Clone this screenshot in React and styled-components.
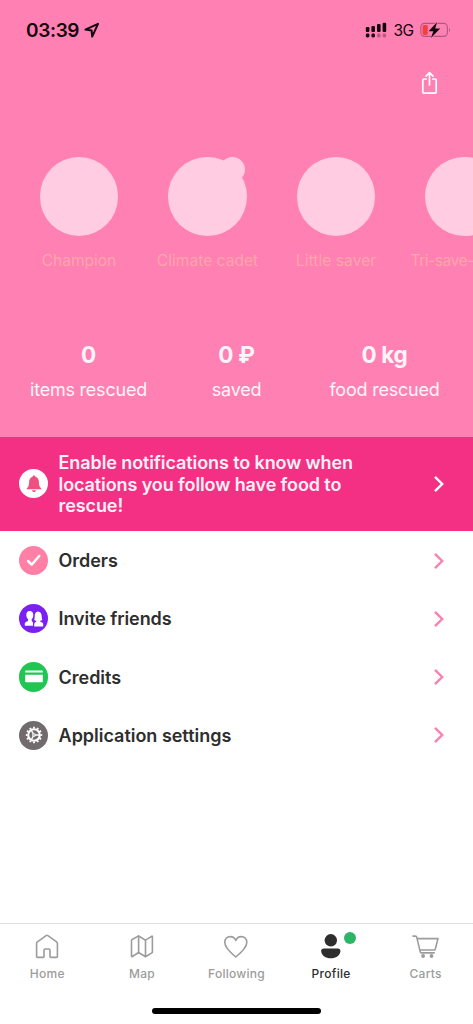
import styled, { createGlobalStyle } from 'styled-components';

const GlobalStyle = createGlobalStyle`
  * {
    box-sizing: border-box;
  }
  body {
    margin: 0;
    background: #ffffff;
    font-family: Inter, 'Liberation Sans', sans-serif;
  }
  svg {
    display: block;
    flex-shrink: 0;
  }
`;

const Screen = styled.div`
  width: 100%;
  height: 100vh;
  display: flex;
  flex-direction: column;
  overflow: hidden;
  background: #ffffff;
`;

const Header = styled.header`
  height: 436.5px;
  flex-shrink: 0;
  background: #ff80b3;
`;

const StatusBar = styled.div`
  height: 60px;
  padding: 0 22px 0 26px;
  display: flex;
  justify-content: space-between;
  align-items: center;
  color: #12060c;
`;

const StatusGroup = styled.div`
  display: flex;
  align-items: center;
`;

const Time = styled.span`
  width: 58px;
  padding-top: 2px;
  font-size: 19px;
  font-weight: 600;
  letter-spacing: -0.35px;
  line-height: 24px;
  white-space: nowrap;
`;

const Network = styled.span`
  width: 26.5px;
  margin-left: 6.5px;
  padding-top: 2px;
  font-size: 15.5px;
  font-weight: 400;
  letter-spacing: -0.6px;
  line-height: 20px;
`;

const ShareButton = styled.button`
  display: block;
  margin: 11px 35px 0 auto;
  padding: 0;
  border: none;
  background: none;
  color: #ffffff;
`;

const BadgeList = styled.div`
  display: flex;
  margin-top: 62px;
  padding-left: 14.75px;
  overflow: hidden;
`;

const Badge = styled.div`
  width: 128.5px;
  flex-shrink: 0;
  display: flex;
  flex-direction: column;
  align-items: center;
`;

const BadgeCircle = styled.div`
  position: relative;
  width: 78.5px;
  height: 78.5px;
  border-radius: 50%;
  background: #ffcce1;
`;

const BadgeCounter = styled.span`
  position: absolute;
  top: 0;
  right: 1.5px;
  width: 25px;
  height: 25px;
  border-radius: 50%;
  background: #ffcce1;
`;

const BadgeLabel = styled.span`
  min-width: ${({ $minWidth }) => $minWidth || 0}px;
  margin-top: 15px;
  font-size: 15.5px;
  line-height: 20px;
  letter-spacing: ${({ $spacing }) => $spacing || 0}px;
  color: #ffa5ac;
  white-space: nowrap;
`;

const Stats = styled.div`
  display: flex;
  justify-content: center;
  margin-top: 70px;
`;

const Stat = styled.div`
  width: 148px;
  text-align: center;
  color: #fff5f9;
`;

const StatValue = styled.div`
  font-size: 22.5px;
  font-weight: 700;
  line-height: 28px;
  letter-spacing: -0.3px;
`;

const StatLabel = styled.div`
  margin-top: 9px;
  font-size: 18px;
  line-height: 24px;
  letter-spacing: -0.22px;
  white-space: nowrap;
`;

const Banner = styled.div`
  height: 94.5px;
  flex-shrink: 0;
  display: flex;
  align-items: center;
  padding: 0 28px 0 19.2px;
  background: #f33083;
  color: #fff0f7;
`;

const BannerText = styled.p`
  flex: 1;
  margin: 1.5px 0 0 10.2px;
  font-size: 18px;
  font-weight: 600;
  line-height: 21.7px;
  letter-spacing: -0.1px;
`;

const Menu = styled.nav`
  flex: 1;
  padding-top: 0.5px;
`;

const MenuRow = styled.div`
  height: 58.2px;
  display: flex;
  align-items: center;
  padding: 0 28px 0 19.2px;
`;

const MenuLabel = styled.span`
  flex: 1;
  margin-left: 10.2px;
  padding-top: 1.4px;
  font-size: 18px;
  font-weight: 600;
  line-height: 24px;
  letter-spacing: ${({ $spacing }) => $spacing || 0}px;
  color: #2e2e2e;
`;

const IconDisc = styled.div`
  width: 29.2px;
  height: 29.2px;
  flex-shrink: 0;
  display: flex;
  align-items: center;
  justify-content: center;
  border-radius: 50%;
  background: ${({ $color }) => $color};
`;

const TabBar = styled.footer`
  height: 101px;
  flex-shrink: 0;
  border-top: 1px solid #dedede;
  background: #ffffff;
`;

const Tabs = styled.div`
  display: flex;
  height: 87px;
`;

const Tab = styled.div`
  position: relative;
  flex: 1;
  display: flex;
  flex-direction: column;
  align-items: center;
  padding-top: 8px;
  color: ${({ $active }) => ($active ? '#2e2e2e' : '#9c9c9c')};
`;

const TabLabel = styled.span`
  margin-top: 4px;
  font-size: 12px;
  font-weight: 500;
  line-height: 16px;
  letter-spacing: ${({ $spacing }) => $spacing || 0}px;
`;

const TabDot = styled.span`
  position: absolute;
  top: 7.5px;
  left: 60px;
  width: 12.5px;
  height: 12.5px;
  border-radius: 50%;
  background: #2cb566;
`;

const HomeIndicator = styled.div`
  width: 169px;
  height: 6px;
  margin: -3px auto 0;
  border-radius: 3px;
  background: #000000;
`;

const LocationIcon = () => (
  <svg width="16" height="16" viewBox="0 0 16 16" fill="none" stroke="currentColor" strokeWidth="2" strokeLinejoin="round">
    <path d="M14 1.8 1.4 7.6l6.2.8.6 6.200L14 1.800Z" />
  </svg>
);

const SignalIcon = () => (
  <svg width="22" height="16" viewBox="0 0 22 16" fill="currentColor">
    <rect x="0.8" y="5" width="3.6" height="5" rx="1.1" />
    <rect x="6.4" y="4" width="3.6" height="6" rx="1.1" />
    <rect x="12" y="2" width="3.6" height="8" rx="1.1" />
    <rect x="17.6" y="0.7" width="3.6" height="9.3" rx="1.1" />
    <rect x="0.8" y="11.5" width="3.6" height="4" rx="1.4" />
    <rect x="6.4" y="11.5" width="3.6" height="4" rx="1.4" />
    <rect x="12" y="11.5" width="3.6" height="4" rx="1.4" opacity="0.3" />
    <rect x="17.6" y="11.5" width="3.6" height="4" rx="1.4" opacity="0.3" />
  </svg>
);

const BatteryIcon = () => (
  <svg width="31" height="16" viewBox="0 0 31 16">
    <rect x="0.8" y="1.4" width="26.6" height="13" rx="3.8" fill="none" stroke="#b0577e" strokeWidth="1.1" />
    <path d="M29 6v4c1.4-.6 1.4-3.4 0-4Z" fill="#b0577e" />
    <rect x="2.6" y="3" width="5.2" height="10" rx="1.7" fill="#f4403c" />
    <path
      d="M17.200 0 8.600 9.300h4.700L10.900 16l9.300-9.600h-5L17.200 0Z"
      fill="#12060c"
      stroke="#ff80b3"
      strokeWidth="1.4"
      paintOrder="stroke"
    />
  </svg>
);

const ShareIcon = () => (
  <svg width="17" height="24" viewBox="0 0 17 24" fill="none" stroke="currentColor" strokeWidth="1.7" strokeLinecap="round" strokeLinejoin="round">
    <path d="M5.3 8H2.9c-.6 0-1.1.5-1.1 1.1v11.900c0 .6.5 1.100 1.100 1.100h11.200c.6 0 1.100-.5 1.100-1.100V9.100c0-.6-.5-1.100-1.100-1.100h-2.400M8.500 14V1.600M5 5.100l3.500-3.500 3.500 3.500" />
  </svg>
);

const Chevron = ({ color }) => (
  <svg width="12" height="18" viewBox="0 0 12 18" fill="none" stroke={color} strokeWidth="2.4">
    <path d="m2 1.8 7.2 7.2L2 16.2" />
  </svg>
);

const BellIcon = () => (
  <svg width="16" height="18" viewBox="0 0 16 18" fill="#ee507f">
    <path d="M8 .6c.8 0 1.300.5 1.400 1.200 2.400.7 3.500 2.600 3.500 5.300 0 3.600.7 5.100 2.300 6.200v1H.8v-1c1.600-1.100 2.300-2.600 2.300-6.200 0-2.700 1.100-4.600 3.500-5.300C6.700 1.100 7.200.6 8 .6Z" />
    <path d="M6 15.200h4c-.2 1.200-.9 1.800-2 1.800s-1.800-.6-2-1.800Z" />
  </svg>
);

const CheckIcon = () => (
  <svg width="16" height="14" viewBox="0 0 16 14" fill="none" stroke="#ffffff" strokeWidth="2.5" strokeLinecap="round" strokeLinejoin="round">
    <path d="m2 7 3.700 3.700L13.200 2" />
  </svg>
);

const FriendsIcon = () => (
  <svg width="20" height="18" viewBox="0 0 20 18" fill="#ffffff">
    <path d="M5.800 1c2.200 0 3.500 1.500 3.500 3.900 0 1.700-.6 3.300-1.600 4.200v1.700c.2.700 1.300 1 1.300 2.400v2.600H.8v-2c0-1.900 3-2 3.300-3.200V9.200C3 8.300 2.300 6.600 2.300 4.900 2.300 2.500 3.600 1 5.800 1Z" />
    <path d="M13.900 1.500c2.700 0 3.800 2.200 3.800 5 0 1.800.6 2.900.6 3.600-.5.6-1.600.7-2.500.7.2 1.500 3.400 1.200 3.400 3.600v2.200h-9v-2.200c0-2.100 2.200-2.200 2.400-3.600-.9 0-2-.1-2.400-.7.3-.9.500-2 .5-3.600 0-2.800.9-5 3.200-5Z" />
  </svg>
);

const CardIcon = () => (
  <svg width="18" height="13" viewBox="0 0 18 13" fill="#ffffff">
    <path d="M1 .5h16c.6 0 .8.4.8.8v1.300H.2V1.300c0-.4.2-.8.8-.8ZM.2 4.800h17.600v6.500c0 .6-.4 1-1 1H1.200c-.6 0-1-.4-1-1Z" />
  </svg>
);

const TEETH = Array.from({ length: 12 }, (_, i) => i * 30);

const GearIcon = () => (
  <svg width="18" height="18" viewBox="-9 -9 18 18" fill="none" stroke="#ffffff">
    <circle r="5.8" strokeWidth="2.1" />
    {TEETH.map((angle) => (
      <path key={angle} d="M0-6.400V-8.200" strokeWidth="1.8" transform={`rotate(${angle})`} />
    ))}
    <path d="M1.200 0H5.500M-.6 1-2.800 4.800M-.6-1-2.800-4.800" strokeWidth="1.4" />
    <circle r="1.2" strokeWidth="1.1" />
  </svg>
);

const tabIconProps = {
  width: 28,
  height: 30,
  viewBox: '0 0 28 30',
  fill: 'none',
  stroke: 'currentColor',
  strokeWidth: 1.6,
  strokeLinejoin: 'round',
  strokeLinecap: 'round',
};

const HomeIcon = () => (
  <svg {...tabIconProps}>
    <path d="M3.600 11.300c0-.6.3-1.100.8-1.500L13.100 3.600c.6-.4 1.200-.4 1.800 0l8.700 6.200c.5.4.8.9.8 1.500v13.100c0 .6-.4 1-1 1h-5.600c-.5 0-.8-.3-.8-.8v-6.400c0-.7-.5-1.200-1.200-1.200h-3.600c-.7 0-1.200.5-1.200 1.200v6.400c0 .5-.3.8-.8.8H4.600c-.6 0-1-.4-1-1Z" />
  </svg>
);

const MapIcon = () => (
  <svg {...tabIconProps}>
    <path d="M3.500 8.500c0-.5.2-.8.6-1l6.500-3.600 6.900 4.300 6.100-3.900c.4-.3.8 0 .8.4v15.200c0 .5-.2.8-.6 1l-6.300 3.900-6.900-4.300-6.300 4c-.4.300-.8 0-.8-.4ZM10.600 3.900v16.600M17.500 8.200v16.600" />
  </svg>
);

const HeartIcon = () => (
  <svg {...tabIconProps}>
    <path d="M13.800 25C9.300 21.400 2.800 16.200 2.800 10.600c0-3.800 2.400-6 5.500-6 2.500 0 4.400 1.300 5.500 3.800 1.100-2.500 3-3.800 5.500-3.800 3.100 0 5.500 2.200 5.500 6C24.800 16.200 18.300 21.400 13.800 25Z" />
  </svg>
);

const ProfileIcon = () => (
  <svg {...tabIconProps} fill="currentColor" stroke="none">
    <circle cx="13.8" cy="8.3" r="6.2" />
    <path d="M7 16.500h13.600c1.900 0 3.100 1.200 2.800 3-.6 4.300-4.400 6.800-9.600 6.800s-9-2.500-9.600-6.800c-.3-1.800.9-3 2.800-3Z" />
  </svg>
);

const CartIcon = () => (
  <svg {...tabIconProps}>
    <path d="M1 4.100h2.400c.7 0 1.100.4 1.300 1l3.600 15c.1.500.5.800.9.800h13M5.100 6.600h20.900l-2.700 10.400c-.2.700-.6 1-1.300 1H7.900" />
    <circle cx="11.100" cy="24" r="1.100" fill="currentColor" />
    <circle cx="19.500" cy="24" r="1.100" fill="currentColor" />
  </svg>
);

const badges = [
  { label: 'Champion', spacing: 0 },
  { label: 'Climate cadet', spacing: 0.05, counter: true },
  { label: 'Little saver', spacing: 0.08 },
  { label: 'Tri-save-', spacing: -0.45, minWidth: 108 },
];

const stats = [
  { value: '0', label: 'items rescued' },
  { value: '0 ₽', label: 'saved' },
  { value: '0 kg', label: 'food rescued' },
];

const menuItems = [
  { label: 'Orders', color: '#ff7fa6', icon: <CheckIcon />, spacing: -0.05 },
  { label: 'Invite friends', color: '#7a20f2', icon: <FriendsIcon />, spacing: -0.08 },
  { label: 'Credits', color: '#20c651', icon: <CardIcon />, spacing: -0.03 },
  { label: 'Application settings', color: '#716b6e', icon: <GearIcon />, spacing: -0.02 },
];

const tabs = [
  { label: 'Home', icon: <HomeIcon />, spacing: 0.3 },
  { label: 'Map', icon: <MapIcon />, spacing: 0.2 },
  { label: 'Following', icon: <HeartIcon />, spacing: 0.25 },
  { label: 'Profile', icon: <ProfileIcon />, spacing: 0.3, active: true },
  { label: 'Carts', icon: <CartIcon />, spacing: 0.3 },
];

function App() {
  return (
    <Screen>
      <GlobalStyle />
      <Header>
        <StatusBar>
          <StatusGroup>
            <Time>03:39</Time>
            <LocationIcon />
          </StatusGroup>
          <StatusGroup>
            <SignalIcon />
            <Network>3G</Network>
            <BatteryIcon />
          </StatusGroup>
        </StatusBar>
        <ShareButton aria-label="Share">
          <ShareIcon />
        </ShareButton>
        <BadgeList>
          {badges.map(({ label, spacing, counter, minWidth }) => (
            <Badge key={label}>
              <BadgeCircle>{counter && <BadgeCounter />}</BadgeCircle>
              <BadgeLabel $spacing={spacing} $minWidth={minWidth}>
                {label}
              </BadgeLabel>
            </Badge>
          ))}
        </BadgeList>
        <Stats>
          {stats.map(({ value, label }) => (
            <Stat key={label}>
              <StatValue>{value}</StatValue>
              <StatLabel>{label}</StatLabel>
            </Stat>
          ))}
        </Stats>
      </Header>
      <Banner>
        <IconDisc $color="#ffffff">
          <BellIcon />
        </IconDisc>
        <BannerText>
          Enable notifications to know when
          <br />
          locations you follow have food to
          <br />
          rescue!
        </BannerText>
        <Chevron color="#ffffff" />
      </Banner>
      <Menu>
        {menuItems.map(({ label, color, icon, spacing }) => (
          <MenuRow key={label}>
            <IconDisc $color={color}>{icon}</IconDisc>
            <MenuLabel $spacing={spacing}>{label}</MenuLabel>
            <Chevron color="#fb80b0" />
          </MenuRow>
        ))}
      </Menu>
      <TabBar>
        <Tabs>
          {tabs.map(({ label, icon, spacing, active }) => (
            <Tab key={label} $active={active}>
              {icon}
              {active && <TabDot />}
              <TabLabel $spacing={spacing}>{label}</TabLabel>
            </Tab>
          ))}
        </Tabs>
        <HomeIndicator />
      </TabBar>
    </Screen>
  );
}

export default App;
